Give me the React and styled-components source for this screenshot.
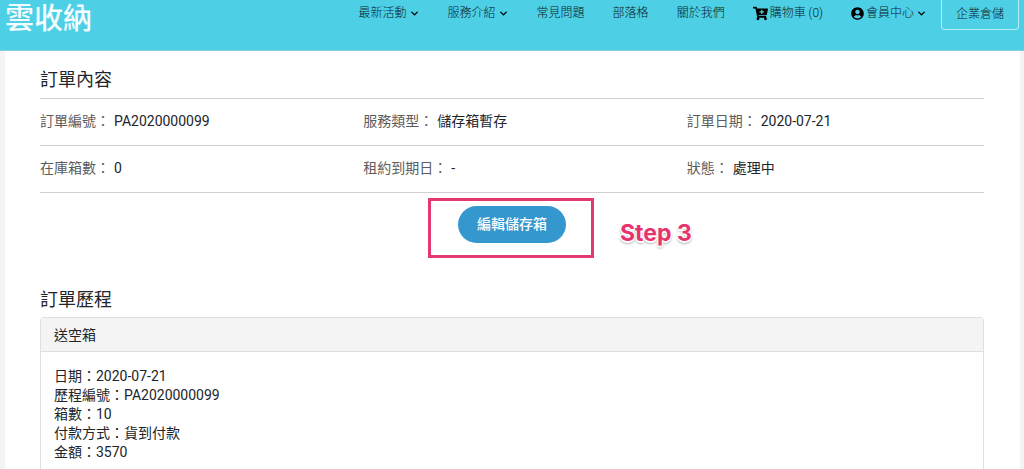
import React from 'react';
import styled, { createGlobalStyle } from 'styled-components';
import { FaCartPlus, FaUserCircle } from 'react-icons/fa';
import { FiChevronDown } from 'react-icons/fi';

const GlobalStyle = createGlobalStyle`
    * {
        box-sizing: border-box;
    }

    body {
        margin: 0;
        background: #f4f4f4;
        color: #212529;
        font-family: Roboto, "Noto Sans CJK TC", sans-serif;
        font-size: 14px;
        line-height: 20px;
    }
`;

const Header = styled.header`
    display: flex;
    justify-content: space-between;
    align-items: flex-start;
    height: 51px;
    padding: 0 5px;
    background: #4dcfe5;
    border-bottom: 1px solid #86cdd9;
`;

const Logo = styled.a`
    padding-top: 3px;
    color: #f4fdff;
    font-size: 29px;
    font-weight: 500;
    line-height: 32px;
    text-decoration: none;
`;

const Nav = styled.nav`
    display: flex;
    align-items: flex-start;
    gap: 28px;
`;

const NavLink = styled.a`
    display: flex;
    align-items: center;
    gap: 2px;
    padding-top: 3px;
    color: #0b2329;
    font-size: 12px;
    font-weight: 300;
    text-decoration: none;
    white-space: nowrap;

    svg {
        color: #000;
    }
`;

const BusinessLink = styled.a`
    margin-left: -14px;
    padding: 4px 14px 5px;
    border: 1px solid #b5eef8;
    border-top: 0;
    border-radius: 0 0 4px 4px;
    color: #0b2329;
    font-size: 12px;
    font-weight: 300;
    text-decoration: none;
    white-space: nowrap;
`;

const Page = styled.main`
    margin: 0 4px 0 5px;
    padding: 16px 36px 0 35px;
    background: #fff;
`;

const Title = styled.h2`
    margin: 0;
    font-size: 18px;
    font-weight: 400;
    line-height: 26px;
`;

const InfoList = styled.dl`
    margin: 5px 0 0;
    border-top: 1px solid #ced0d2;
`;

const InfoRow = styled.div`
    display: grid;
    grid-template-columns: repeat(3, 1fr);
    gap: 26px;
    padding: 12px 0 14px;
    border-bottom: 1px solid #ced0d2;
`;

const InfoItem = styled.div`
    display: flex;
    gap: 4px;
`;

const Label = styled.dt`
    color: #5c5c5c;
`;

const Value = styled.dd`
    margin: 0;
`;

const ActionRow = styled.div`
    display: flex;
    justify-content: center;
    padding: 13px 0 44px;
`;

const Action = styled.div`
    position: relative;
`;

const EditButton = styled.button`
    display: block;
    padding: 8px 19px;
    border: 0;
    border-radius: 19px;
    background: #3498cf;
    color: #fff;
    font-family: inherit;
    font-size: 14px;
    font-weight: 500;
    line-height: 21px;
    cursor: pointer;
`;

const Highlight = styled.div`
    position: absolute;
    inset: -8px -28px -15px -30px;
    border: 3px solid #e4396f;
    pointer-events: none;
`;

const StepNote = styled.span`
    position: absolute;
    top: 13px;
    left: calc(100% + 54px);
    color: #e8336d;
    font-family: Inter, sans-serif;
    font-size: 23px;
    font-weight: 700;
    line-height: 28px;
    white-space: nowrap;
    text-shadow: 1px 1px 0 #fff, -1px -1px 0 #fff, 1px -1px 0 #fff, -1px 1px 0 #fff, 0 2px 0 #fff, 0 2px 3px rgba(0, 0, 0, 0.6);
`;

const Card = styled.section`
    margin-top: 4px;
    border: 1px solid #dfdfdf;
    border-bottom: 0;
    border-radius: 4px 4px 0 0;
`;

const CardHeader = styled.h3`
    margin: 0;
    padding: 7px 13px 6px;
    border-bottom: 1px solid #dfdfdf;
    background: #f4f4f4;
    font-size: 14px;
    font-weight: 400;
`;

const CardBody = styled.div`
    padding: 15px 13px 9px;
    line-height: 19px;

    p {
        margin: 0;
    }
`;

const links = [
    { text: '最新活動', menu: true },
    { text: '服務介紹', menu: true },
    { text: '常見問題' },
    { text: '部落格' },
    { text: '關於我們' },
    { text: '購物車 (0)', icon: <FaCartPlus size={15} /> },
    { text: '會員中心', icon: <FaUserCircle size={13} />, menu: true },
];

const orderRows = [
    [
        ['訂單編號', 'PA2020000099'],
        ['服務類型', '儲存箱暫存'],
        ['訂單日期', '2020-07-21'],
    ],
    [
        ['在庫箱數', '0'],
        ['租約到期日', '-'],
        ['狀態', '處理中'],
    ],
];

const history = [
    ['日期', '2020-07-21'],
    ['歷程編號', 'PA2020000099'],
    ['箱數', '10'],
    ['付款方式', '貨到付款'],
    ['金額', '3570'],
];

const App = () => {

    return (
        <>
            <GlobalStyle />
            <Header>
                <Logo href="#">雲收納</Logo>
                <Nav>
                    {links.map(({ text, icon, menu }) => (
                        <NavLink href="#" key={text}>
                            {icon}
                            {text}
                            {menu && <FiChevronDown size={11} strokeWidth={3} />}
                        </NavLink>
                    ))}
                    <BusinessLink href="#">企業倉儲</BusinessLink>
                </Nav>
            </Header>
            <Page>
                <Title>訂單內容</Title>
                <InfoList>
                    {orderRows.map((row, i) => (
                        <InfoRow key={i}>
                            {row.map(([label, value]) => (
                                <InfoItem key={label}>
                                    <Label>{label}：</Label>
                                    <Value>{value}</Value>
                                </InfoItem>
                            ))}
                        </InfoRow>
                    ))}
                </InfoList>
                <ActionRow>
                    <Action>
                        <EditButton type="button">編輯儲存箱</EditButton>
                        <Highlight />
                        <StepNote>Step 3</StepNote>
                    </Action>
                </ActionRow>
                <Title>訂單歷程</Title>
                <Card>
                    <CardHeader>送空箱</CardHeader>
                    <CardBody>
                        {history.map(([label, value]) => (
                            <p key={label}>{label}：{value}</p>
                        ))}
                    </CardBody>
                </Card>
            </Page>
        </>
    );
}

export default App;
